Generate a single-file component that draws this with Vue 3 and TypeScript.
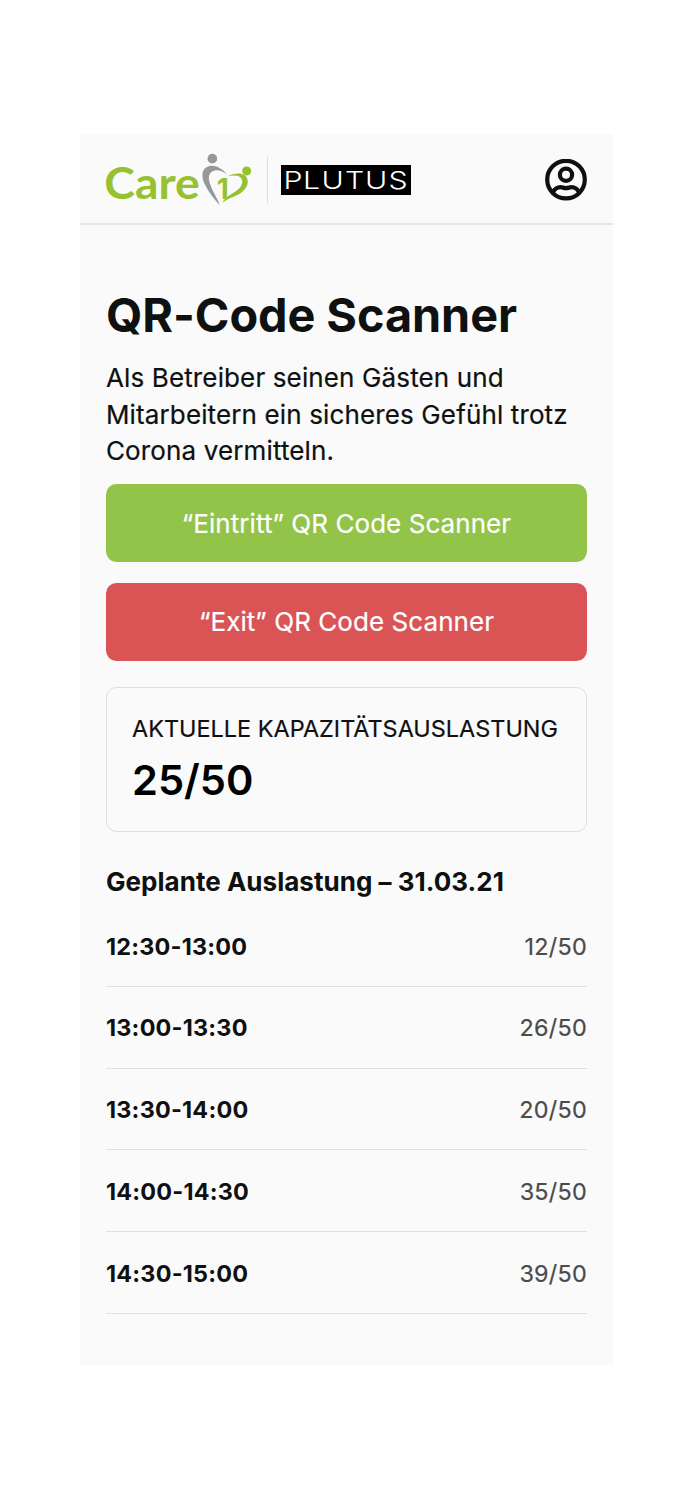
<script setup lang="ts">
interface Slot {
  time: string
  load: string
}

const slots: Slot[] = [
  { time: '12:30-13:00', load: '12/50' },
  { time: '13:00-13:30', load: '26/50' },
  { time: '13:30-14:00', load: '20/50' },
  { time: '14:00-14:30', load: '35/50' },
  { time: '14:30-15:00', load: '39/50' },
]
</script>

<template>
  <main class="screen">
    <header class="bar">
      <svg class="care" viewBox="0 -1 450 180" role="img" aria-label="Care iD">
        <text class="care-word" x="-5" y="147" textLength="286" lengthAdjust="spacingAndGlyphs">Care</text>
        <circle cx="319" cy="25" r="14.5" fill="#969897" />
        <path d="M365 74C348 53 327 43 310 47C287 52 284 78 297 103C309 127 325 146 342 165C334 143 320 124 313 103C305 81 308 66 324 61C337 57 352 63 365 74Z" fill="#969897" />
        <circle cx="422" cy="62" r="13.5" fill="#97c230" />
        <path d="M366 78C387 66 417 66 424 86C431 108 409 130 383 139C369 144 359 150 349 157C358 141 371 134 386 125C404 114 413 99 407 86C402 75 385 73 366 78Z" fill="#97c230" />
        <text class="care-one" x="332" y="146">1</text>
      </svg>
      <span class="divider"></span>
      <svg class="plutus" viewBox="0 0 130 30" role="img" aria-label="PLUTUS">
        <rect width="130" height="30" fill="#000" />
        <text class="plutus-word" transform="scale(1.24 1)" x="2 17.7 32.6 51.6 67.7 86.7" y="23.8">PLUTUS</text>
      </svg>
      <svg class="user" viewBox="0 0 42 42" fill="none" stroke="#0f1010" stroke-width="4.2">
        <circle cx="21" cy="20.6" r="18.8" />
        <circle cx="21" cy="15.8" r="6.1" />
        <path d="M7.6 33.6C9.5 30.1 12.5 28.2 15.5 28.2C17.5 28.2 18.5 29.1 21 29.1C23.5 29.1 24.5 28.2 26.5 28.2C29.5 28.2 32.5 30.1 34.4 33.6" />
      </svg>
    </header>
    <section class="content">
      <h1>QR-Code Scanner</h1>
      <p class="intro">Als Betreiber seinen Gästen und<br />Mitarbeitern ein sicheres Gefühl trotz<br />Corona vermitteln.</p>
      <button class="action enter" type="button">“Eintritt” QR Code Scanner</button>
      <button class="action leave" type="button">“Exit” QR Code Scanner</button>
      <div class="card">
        <span class="label">AKTUELLE KAPAZITÄTSAUSLASTUNG</span>
        <strong>25/50</strong>
      </div>
      <h2>Geplante Auslastung – 31.03.21</h2>
      <ul>
        <li v-for="slot in slots" :key="slot.time">
          <b>{{ slot.time }}</b>
          <span>{{ slot.load }}</span>
        </li>
      </ul>
    </section>
  </main>
</template>

<style>
body {
  margin: 0;
  background: #fff;
}
</style>

<style scoped>
.screen {
  box-sizing: border-box;
  width: 533px;
  height: 1231px;
  margin: 134.4px 0 0 80px;
  background: #fafafa;
  color: #0f1010;
  font-family: Inter, "Liberation Sans", sans-serif;
  white-space: nowrap;
}
.bar {
  box-sizing: border-box;
  display: flex;
  align-items: center;
  height: 90.6px;
  padding: 2.4px 26px 0;
  border-bottom: 2px solid #e5e5e5;
}
.care {
  width: 150px;
  height: 60px;
  overflow: visible;
}
.care-word {
  font: 700 130px Lato, sans-serif;
  fill: #97c230;
}
.care-one {
  font: 700 84px Inter, sans-serif;
  fill: #97c230;
}
.divider {
  width: 1px;
  height: 46px;
  margin: 0 13px 0 11px;
  background: #dedede;
}
.plutus {
  width: 130px;
  height: 30px;
}
.plutus-word {
  font: 300 24.4px Inter, sans-serif;
  fill: #fff;
}
.user {
  width: 42px;
  height: 42px;
  margin-left: auto;
}
.content {
  padding: 61px 26px 0;
}
h1 {
  margin: 0;
  font-size: 46.8px;
  line-height: 58px;
  font-weight: 700;
  letter-spacing: -0.05px;
}
.intro {
  margin: 16.4px 0 0;
  font-size: 26px;
  line-height: 36.4px;
  letter-spacing: 0.13px;
  -webkit-text-stroke: 0.2px currentColor;
}
.action {
  display: block;
  width: 481px;
  height: 78px;
  margin: 0 0 20.5px;
  padding: 0;
  border: 0;
  border-radius: 10.4px;
  color: #fff;
  font: 400 26px Inter, sans-serif;
  letter-spacing: 0.06px;
  -webkit-text-stroke: 0.2px currentColor;
}
.enter {
  margin-top: 14.8px;
  background: #91c449;
}
.leave {
  margin-bottom: 25.8px;
  background: #da5456;
}
.card {
  box-sizing: border-box;
  height: 145px;
  padding: 25px 25px;
  border: 1.6px solid #dedede;
  border-radius: 10.4px;
}
.label {
  display: block;
  font-size: 23.4px;
  line-height: 31px;
  letter-spacing: 0.03px;
  -webkit-text-stroke: 0.2px currentColor;
}
.card strong {
  display: block;
  margin-top: 8px;
  color: #000;
  font-size: 41.6px;
  line-height: 56px;
  font-weight: 600;
}
h2 {
  margin: 32px 0 0;
  font-size: 26px;
  line-height: 36px;
  font-weight: 700;
  letter-spacing: 0.03px;
}
ul {
  margin: 5.5px 0 0;
  padding: 0;
  list-style: none;
}
li {
  box-sizing: border-box;
  display: flex;
  align-items: center;
  justify-content: space-between;
  height: 81.75px;
  padding-top: 1px;
  border-bottom: 1.3px solid #e0e0e0;
  font-size: 23.4px;
}
li b {
  letter-spacing: 0.21px;
}
li span {
  color: #4b4b4b;
  letter-spacing: 0.25px;
  -webkit-text-stroke: 0.2px currentColor;
}
</style>
